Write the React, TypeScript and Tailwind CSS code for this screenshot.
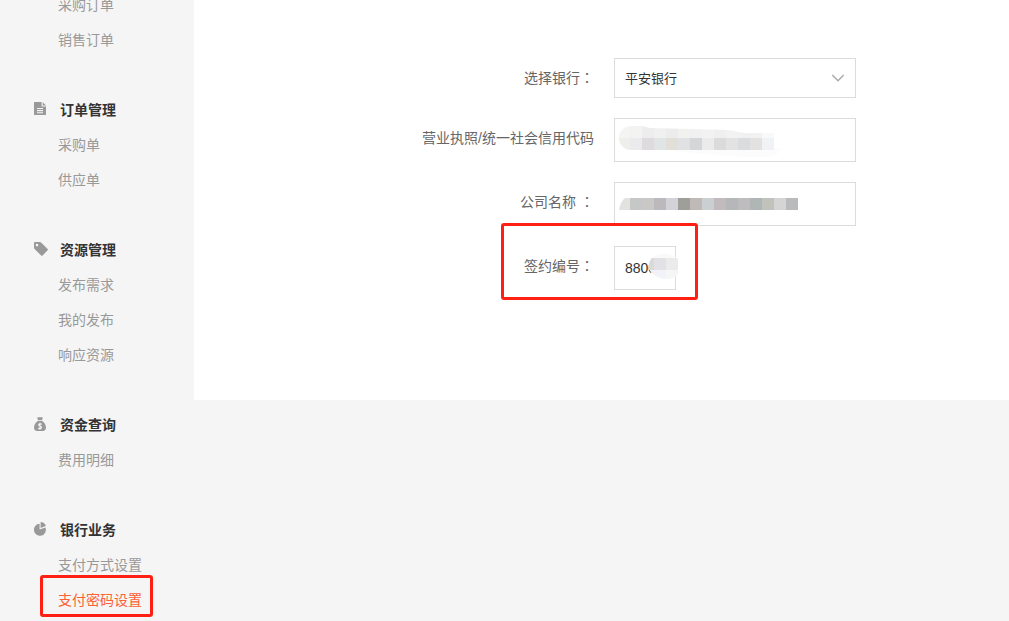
import { ReactNode, useState } from 'react';

const FileIcon = () => (
  <svg viewBox="0 0 14 14" className="h-3.5 w-3.5" aria-hidden="true">
    <path fill="#999" fillRule="evenodd" d="M0 0h7.6v4.6H12V13H0zM3 6v1.1h6V6zm0 2.1v1.1h6V8.1zm0 2.1v1.1h6v-1.1z" />
    <path fill="#999" d="M8.7.2 12 3.5H8.7z" />
  </svg>
);

const TagIcon = () => (
  <svg viewBox="0 0 14 14" className="h-3.5 w-3.5" aria-hidden="true">
    <path
      fill="#999"
      fillRule="evenodd"
      d="M.9 0h5q.6 0 1.2.6l6.5 6.3q.8.7 0 1.4l-5 5.1q-.7.7-1.4 0L.6 7Q0 6.4 0 5.8V.9Q0 0 .9 0zM3 1.8a1.3 1.3 0 1 0 0 2.6 1.3 1.3 0 0 0 0-2.6z"
    />
  </svg>
);

const MoneyBagIcon = () => (
  <svg viewBox="0 0 14 14" className="h-3.5 w-3.5" aria-hidden="true">
    <path fill="#999" d="M3 .3Q4 .9 4.8 0q1.2.5 2.4 0Q8 .9 9 .3L8 3H4zM4 3.7h4c2.5 1.6 4 4.3 4 6.8C12 12.800 10.800 14 8.800 14H3.200C1.200 14 0 12.800 0 10.500 0 8 1.500 5.300 4 3.700z" />
    <path
      d="M7.800 7.300Q5 6 4.700 7.700C4.600 9.200 7.700 8.800 7.500 10.600 7.200 12 5.200 11.900 4.300 11.200M6 5.800v7"
      fill="none"
      stroke="#f5f5f5"
      strokeWidth="1.1"
    />
  </svg>
);

const PieIcon = () => (
  <svg viewBox="0 0 14 14" className="h-3.5 w-3.5" aria-hidden="true">
    <path fill="#999" d="M5.600 1.800V7.600L11.400 5.500A6 6 0 1 1 5.600 1.800z" />
    <path fill="#999" d="M6.600 0A5.800 5.800 0 0 1 11.800 3.900L6.600 6.100z" />
  </svg>
);

type Group = { title?: string; icon?: ReactNode; items: string[] };

const groups: Group[] = [
  { items: ['采购订单', '销售订单'] },
  { title: '订单管理', icon: <FileIcon />, items: ['采购单', '供应单'] },
  { title: '资源管理', icon: <TagIcon />, items: ['发布需求', '我的发布', '响应资源'] },
  { title: '资金查询', icon: <MoneyBagIcon />, items: ['费用明细'] },
  { title: '银行业务', icon: <PieIcon />, items: ['支付方式设置', '支付密码设置'] },
];

const ACTIVE = '支付密码设置';

function Sidebar() {
  return (
    <aside className="w-[194px] shrink-0 overflow-hidden">
      <nav className="-mt-3 flex flex-col gap-[35px]">
        {groups.map((group, i) => (
          <section key={i}>
            {group.title && (
              <h2 className="flex h-[35px] items-center gap-3 pb-px pl-[34px] font-bold text-[#333]">
                <span className="pb-0.5">{group.icon}</span>
                {group.title}
              </h2>
            )}
            <ul>
              {group.items.map((item) => (
                <li key={item} className="relative h-[35px] pl-[58px] leading-[35px]">
                  <a href="#" className={item === ACTIVE ? 'text-[#ff6036]' : 'text-[#999]'}>
                    {item}
                  </a>
                  {item === ACTIVE && (
                    <span className="pointer-events-none absolute -top-2 left-10 h-[42px] w-[113px] rounded-[3px] border-3 border-[#ff2013]" />
                  )}
                </li>
              ))}
            </ul>
          </section>
        ))}
      </nav>
    </aside>
  );
}

function Row({ id, label, children }: { id: string; label: ReactNode; children: ReactNode }) {
  return (
    <div className="relative flex items-start gap-5">
      <label htmlFor={id} className="w-[200px] shrink-0 text-right leading-10 text-[#666]">
        {label}
      </label>
      <div className="relative">{children}</div>
    </div>
  );
}

const Colon = () => <span className="font-['Noto_Sans_CJK_TC',sans-serif] leading-none">：</span>;

const box = 'block border border-[#dcdcdc] bg-white px-2.5 text-[#333] outline-none';

const licenseTop = ['#f4f4f3', '#f3f3f2', '#ededed', '#f0f0f0', '#ececec', '#f1f1f0', '#f0f0f0', '#f2f2f2', '#efefef', '#f2f2f2', '#f1f1f1', '#f2f2f2', '#f8f9fa'];
const licenseBottom = ['#efeeea', '#ebebed', '#dddbdd', '#e0e4e4', '#e1dfd8', '#dfe1e3', '#d5d6d8', '#ebebeb', '#dadcdc', '#e3e3e3', '#dadcdd', '#e4e2e0', '#f1f2f5'];
const company = ['#e2e2e1', '#c5c8c7', '#c9c8c7', '#bbb9bb', '#d2d2d8', '#9f9f99', '#bfbab7', '#cacfd2', '#c1bbbe', '#b5b7b9', '#bfbcbf', '#afb6b5', '#c1c2bc', '#d5d5d5', '#b9babb'];

function LicenseMask() {
  return (
    <svg viewBox="0 0 242 44" className="pointer-events-none absolute inset-0 h-11 w-[242px]" aria-hidden="true">
      <clipPath id="license">
        <path d="M17 8H28L36 10 114 12 130 15H160V38H140Q120 37 100 35L50 33 17 32A12 12 0 0 1 17 8z" />
      </clipPath>
      <g clipPath="url(#license)" shapeRendering="crispEdges">
        {licenseTop.map((c, i) => (
          <rect key={i} x={4 + i * 12} y="8" width="12" height="12" fill={c} />
        ))}
        {licenseBottom.map((c, i) => (
          <rect key={i} x={4 + i * 12} y="20" width="12" height="12" fill={c} />
        ))}
      </g>
      <path d="M52 32H160V30H167Q164 38 156 39H132Q90 37 52 32z" fill="#fcfcfc" />
    </svg>
  );
}

function CompanyMask() {
  return (
    <svg viewBox="0 0 242 44" className="pointer-events-none absolute inset-0 h-11 w-[242px]" aria-hidden="true">
      <clipPath id="company">
        <path d="M11 16H184V28H5Q6 20 11 16z" />
      </clipPath>
      <g clipPath="url(#company)" shapeRendering="crispEdges">
        {company.map((c, i) => (
          <rect key={i} x={4 + i * 12} y="16" width="12" height="12" fill={c} />
        ))}
      </g>
    </svg>
  );
}

function ContractMask() {
  return (
    <svg viewBox="0 0 70 44" className="pointer-events-none absolute inset-0 h-11 w-[70px]" aria-hidden="true">
      <clipPath id="contract">
        <path d="M38 12Q49 4 60 10L64 13V28Q60 33 51 33 39 31 35 23 34 16 38 12z" />
      </clipPath>
      <g clipPath="url(#contract)" shapeRendering="crispEdges">
        <rect x="28" y="0" width="36" height="44" fill="#fafafa" />
        <rect x="28" y="12" width="12" height="12" fill="#dadadb" />
        <rect x="40" y="12" width="12" height="12" fill="#e1e1e6" />
        <rect x="52" y="12" width="12" height="12" fill="#ebebeb" />
        <rect x="28" y="24" width="12" height="12" fill="#f1f1f3" />
        <rect x="40" y="24" width="12" height="12" fill="#f2f3f8" />
        <rect x="52" y="24" width="12" height="12" fill="#f6f6f6" />
      </g>
    </svg>
  );
}

export default function App() {
  const [license, setLicense] = useState('');
  const [companyName, setCompanyName] = useState('');
  const [contract, setContract] = useState('8800');

  return (
    <div className="flex min-h-screen items-start bg-[#f5f5f5] font-['Liberation_Sans','Noto_Sans_CJK_SC',sans-serif] text-sm">
      <Sidebar />
      <main className="min-w-0 flex-1 bg-white pt-[58px] pb-[110px] pl-[200px]">
        <form className="flex flex-col gap-5">
          <Row id="bank" label={<>选择银行<Colon /></>}>
            <select id="bank" className={`${box} h-10 w-[242px] appearance-none pt-0.5 text-[13px]`}>
              <option>平安银行</option>
            </select>
            <svg viewBox="0 0 14 8" className="pointer-events-none absolute top-4 right-[11px] h-2 w-3.5" aria-hidden="true">
              <path d="M1.300 1 7 6.700 12.700 1" fill="none" stroke="#aaa" strokeWidth="1.5" />
            </svg>
          </Row>
          <Row id="license-no" label="营业执照/统一社会信用代码">
            <input id="license-no" value={license} onChange={(e) => setLicense(e.target.value)} className={`${box} h-11 w-[242px]`} />
            <LicenseMask />
          </Row>
          <Row id="company-name" label={<>公司名称 <Colon /></>}>
            <input id="company-name" value={companyName} onChange={(e) => setCompanyName(e.target.value)} className={`${box} h-11 w-[242px]`} />
            <CompanyMask />
          </Row>
          <Row id="contract-no" label={<>签约编号<Colon /></>}>
            <input id="contract-no" value={contract} onChange={(e) => setContract(e.target.value)} className={`${box} h-11 w-[62px]`} />
            <ContractMask />
            <span className="pointer-events-none absolute -top-[23px] -left-[113px] h-[77px] w-[197px] rounded-[3px] border-3 border-[#ff2013]" />
          </Row>
        </form>
      </main>
    </div>
  );
}
